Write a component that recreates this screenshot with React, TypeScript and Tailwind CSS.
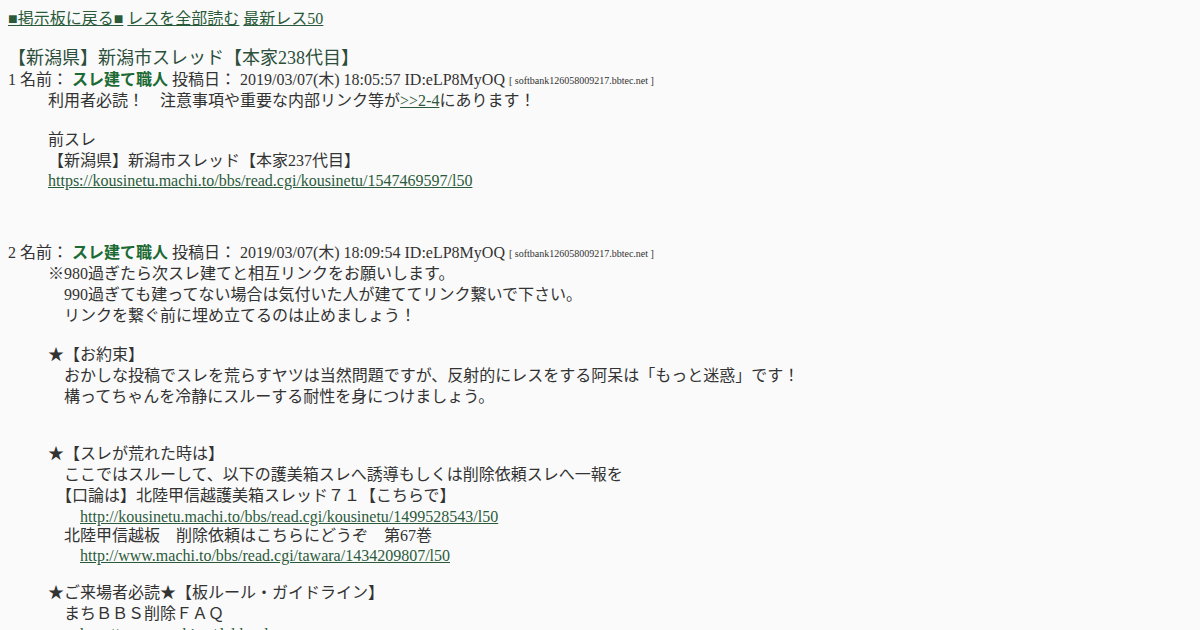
const serif = "font-['Liberation_Serif','Noto_Sans_CJK_JP',serif]";

function Link({ children }: { children: React.ReactNode }) {
  return <a href="#" className="text-[#2b5a3b] underline">{children}</a>;
}

function Line({ children, h = "h-[21px]" }: { children?: React.ReactNode; h?: string }) {
  return <div className={`${h} leading-[21px] whitespace-pre`}>{children}</div>;
}

function Blank() {
  return <div className="h-[18px]" />;
}

function Header({ no, time }: { no: number; time: string }) {
  return (
    <Line>
      {no} 名前：<b className="ml-[4px] text-[#1c6a34]">スレ建て職人</b> 投稿日：{" "}
      <span>2019/03/07(木) {time} ID:eLP8MyOQ</span>{" "}
      <span className="text-[10px] align-[1px]">[ softbank126058009217.bbtec.net ]</span>
    </Line>
  );
}

export default function App() {
  return (
    <div className={`${serif} min-h-screen bg-[#fafafa] p-2 text-[16px] text-[#333333]`}>
      <Line>
        <Link>■掲示板に戻る■</Link> <Link>レスを全部読む</Link> <Link>最新レス50</Link>
      </Line>
      <div className="mt-[19px] h-[21px] text-[18px] leading-[21px] text-[#2b4f3a]">
        【新潟県】新潟市スレッド【本家238代目】
      </div>
      <dl>
        <dt>
          <Header no={1} time="18:05:57" />
        </dt>
        <dd className="ml-10">
          <Line>
            利用者必読！　注意事項や重要な内部リンク等が<Link>&gt;&gt;2-4</Link>にあります！
          </Line>
          <Blank />
          <Line>前スレ</Line>
          <Line h="h-[20px]">【新潟県】新潟市スレッド【本家237代目】</Line>
          <Line h="h-[19px]">
            <Link>https://kousinetu.machi.to/bbs/read.cgi/kousinetu/1547469597/l50</Link>
          </Line>
        </dd>
        <dt className="mt-[53px]">
          <Header no={2} time="18:09:54" />
        </dt>
        <dd className="ml-10">
          <Line>※980過ぎたら次スレ建てと相互リンクをお願いします。</Line>
          <Line>{"　990過ぎても建ってない場合は気付いた人が建ててリンク繋いで下さい。"}</Line>
          <Line>{"　リンクを繋ぐ前に埋め立てるのは止めましょう！"}</Line>
          <Blank />
          <Line>★【お約束】</Line>
          <Line>{"　おかしな投稿でスレを荒らすヤツは当然問題ですが、反射的にレスをする阿呆は「もっと迷惑」です！"}</Line>
          <Line>{"　構ってちゃんを冷静にスルーする耐性を身につけましょう。"}</Line>
          <Blank />
          <Blank />
          <Line>★【スレが荒れた時は】</Line>
          <Line>{"　ここではスルーして、以下の護美箱スレへ誘導もしくは削除依頼スレへ一報を"}</Line>
          <Line>{"　【口論は】北陸甲信越護美箱スレッド７１【こちらで】"}</Line>
          <Line h="h-[19px]">
            {"　　"}
            <Link>http://kousinetu.machi.to/bbs/read.cgi/kousinetu/1499528543/l50</Link>
          </Line>
          <Line h="h-[20px]">{"　北陸甲信越板　削除依頼はこちらにどうぞ　第67巻"}</Line>
          <Line h="h-[19px]">
            {"　　"}
            <Link>http://www.machi.to/bbs/read.cgi/tawara/1434209807/l50</Link>
          </Line>
          <Blank />
          <Line>★ご来場者必読★【板ルール・ガイドライン】</Line>
          <Line>{"　まちＢＢＳ削除ＦＡＱ"}</Line>
          <Line h="h-[19px]">
            {"　　"}
            <Link>http://www.machi.to/del.html</Link>
          </Line>
        </dd>
      </dl>
    </div>
  );
}
